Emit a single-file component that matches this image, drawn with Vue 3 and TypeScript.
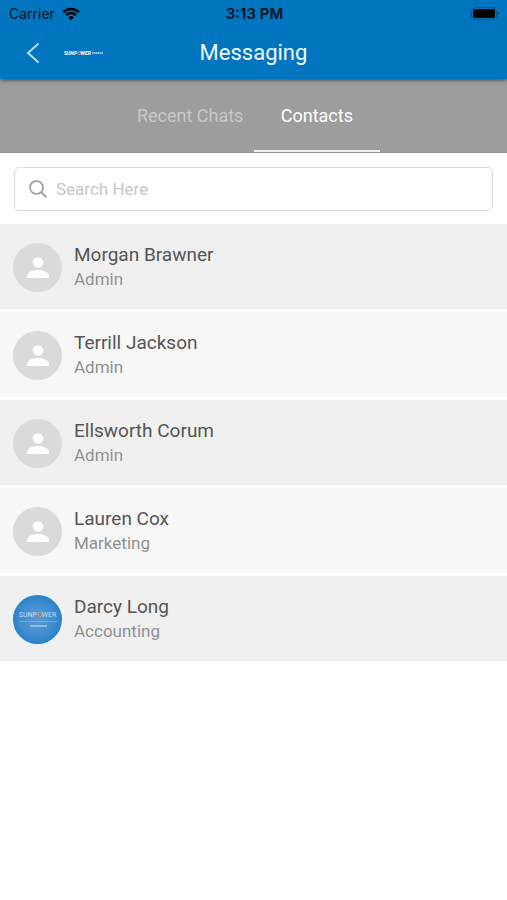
<script setup lang="ts">
import { computed, ref } from 'vue'

interface Contact {
  name: string
  role: string
  branded?: boolean
}

type Tab = 'Recent Chats' | 'Contacts'

const tabs: Tab[] = ['Recent Chats', 'Contacts']
const activeTab = ref<Tab>('Contacts')
const query = ref('')

const contacts: Contact[] = [
  { name: 'Morgan Brawner', role: 'Admin' },
  { name: 'Terrill Jackson', role: 'Admin' },
  { name: 'Ellsworth Corum', role: 'Admin' },
  { name: 'Lauren Cox', role: 'Marketing' },
  { name: 'Darcy Long', role: 'Accounting', branded: true },
]

const visibleContacts = computed(() =>
  contacts.filter((c) => c.name.toLowerCase().includes(query.value.trim().toLowerCase())),
)
</script>

<template>
  <div class="screen">
    <header class="top">
      <div class="status">
        <div class="carrier">
          <span>Carrier</span>
          <svg class="wifi" viewBox="0 0 18 14" aria-hidden="true">
            <path d="M1.2 5.1a11.2 11.2 0 0 1 15.6 0M4 8.1a7.2 7.2 0 0 1 10 0" fill="none" stroke="#000" stroke-width="2.5" />
            <path d="M9 13.4 6.1 10.4a4.1 4.1 0 0 1 5.8 0Z" fill="#000" />
          </svg>
        </div>
        <span class="time">3:13 PM</span>
        <svg class="battery" viewBox="0 0 30 14" aria-hidden="true">
          <rect x="1.5" y="0.5" width="25" height="12" rx="3.5" fill="none" stroke="#00497c" stroke-opacity="0.7" />
          <rect x="3" y="2" width="22" height="9" rx="2" fill="#000" />
          <path d="M27.500 4.500v4c1.200-.4 1.800-1.100 1.800-2s-.6-1.600-1.800-2Z" fill="#00497c" fill-opacity="0.8" />
        </svg>
      </div>
      <div class="bar">
        <div class="bar-left">
          <button class="back" type="button" aria-label="Back">
            <svg viewBox="0 0 14 22" aria-hidden="true">
              <path d="M12.500 1.500 2 11l10.500 9.500" fill="none" stroke="#b5dcf5" stroke-width="2" />
            </svg>
          </button>
          <div class="brand">
            <span>SUNP<i>O</i>WER</span>
            <svg viewBox="0 0 11 2" aria-hidden="true">
              <path d="M0 1h11" stroke="#b9dcf3" stroke-width="1.400" stroke-dasharray="1.600 0.300" />
            </svg>
          </div>
        </div>
        <h1>Messaging</h1>
      </div>
    </header>

    <nav class="tabs">
      <button
        v-for="tab in tabs"
        :key="tab"
        type="button"
        class="tab"
        :class="{ active: tab === activeTab }"
        @click="activeTab = tab"
      >
        {{ tab }}
      </button>
    </nav>

    <main v-if="activeTab === 'Contacts'">
      <div class="search-area">
        <label class="search">
          <svg viewBox="0 0 18 18" aria-hidden="true">
            <circle cx="7.500" cy="7.500" r="6.500" fill="none" stroke="#999" stroke-width="1.600" />
            <path d="m12.200 12.200 5 5" stroke="#999" stroke-width="1.800" />
          </svg>
          <input v-model="query" type="text" placeholder="Search Here" aria-label="Search Here" />
        </label>
      </div>
      <ul class="contacts">
        <li v-for="contact in visibleContacts" :key="contact.name" class="contact">
          <div v-if="contact.branded" class="avatar branded">
            <span class="mark">SUNP<i>O</i>WER</span>
            <svg class="submark" viewBox="0 0 38 8" aria-hidden="true">
              <path d="M0 0.500h38" stroke="#82b2df" stroke-width="0.800" />
              <path d="M11 5h17" stroke="#b4d2ec" stroke-width="1.600" stroke-dasharray="1.700 0.300" />
            </svg>
          </div>
          <div v-else class="avatar">
            <svg class="person" viewBox="0 0 22 22" aria-hidden="true">
              <circle cx="11" cy="5.500" r="5.200" fill="#fff" />
              <path d="M0 21v-1.500C0 15.500 5.500 13 11 13s11 2.500 11 6.500V21Z" fill="#fff" />
            </svg>
          </div>
          <div class="details">
            <span class="name">{{ contact.name }}</span>
            <span class="role">{{ contact.role }}</span>
          </div>
        </li>
      </ul>
    </main>
  </div>
</template>

<style>
body {
  background: #fff;
}
</style>

<style scoped>
.screen {
  font-family: Roboto, "Liberation Sans", sans-serif;
}

button {
  margin: 0;
  padding: 0;
  border: 0;
  background: none;
  font: inherit;
  cursor: pointer;
}

i {
  font-style: normal;
  color: #e8a050;
}

.top {
  position: relative;
  background: #0275c0;
  box-shadow: 0 1px 4px rgba(0, 0, 0, 0.6);
}

.status {
  display: grid;
  grid-template-columns: 1fr auto 1fr;
  align-items: center;
  height: 27px;
  padding: 0 7px 0 9px;
  color: #04111c;
  font-family: Inter, sans-serif;
  font-size: 14px;
}

.carrier {
  display: flex;
  align-items: center;
  gap: 7px;
}

.wifi {
  width: 18px;
  height: 14px;
}

.time {
  font-size: 15px;
  font-weight: 600;
}

.battery {
  justify-self: end;
  width: 30px;
  height: 14px;
}

.bar {
  display: grid;
  grid-template-columns: 1fr auto 1fr;
  align-items: center;
  height: 52px;
}

.bar-left {
  display: flex;
  align-items: center;
  gap: 24px;
  padding-left: 26px;
}

.back svg {
  display: block;
  width: 14px;
  height: 22px;
}

.brand {
  display: flex;
  align-items: center;
  gap: 1px;
  color: #fff;
  font-size: 5px;
  font-weight: 700;
  line-height: 6px;
  white-space: nowrap;
}

.brand svg {
  width: 11px;
  height: 2px;
}

h1 {
  margin: 0;
  color: #f2f9ff;
  font-size: 22px;
  font-weight: 400;
  line-height: 28px;
}

.tabs {
  display: flex;
  height: 73px;
  padding: 0 25%;
  border-bottom: 1px solid #919191;
  background: #9d9d9d;
}

.tab {
  flex: 1;
  padding-top: 2px;
  border-bottom: 2px solid transparent;
  color: #c8c8c8;
  font-size: 18px;
  white-space: nowrap;
}

.tab.active {
  border-bottom-color: #f0f0f0;
  color: #fff;
}

.search-area {
  padding: 14px 14px 13px;
}

.search {
  display: flex;
  align-items: center;
  gap: 9px;
  height: 42px;
  padding: 0 14px;
  border: 1px solid #dcdcdc;
  border-radius: 5px;
}

.search svg {
  flex: none;
  width: 18px;
  height: 18px;
}

.search input {
  flex: 1;
  min-width: 0;
  padding: 0;
  border: 0;
  outline: 0;
  background: none;
  color: #555;
  font: inherit;
  font-size: 17px;
  line-height: 22px;
}

.search input::placeholder {
  color: #c6c6c6;
  opacity: 1;
}

.contacts {
  display: flex;
  flex-direction: column;
  gap: 3px;
  margin: 0;
  padding: 0;
  list-style: none;
}

.contact {
  display: flex;
  align-items: center;
  gap: 12px;
  padding: 18px 13px 17px;
  background: #f0f0f0;
}

.contact:nth-child(even) {
  background: #f7f7f7;
}

.avatar {
  display: flex;
  flex: none;
  flex-direction: column;
  align-items: center;
  justify-content: center;
  width: 49px;
  height: 49px;
  margin-top: 1px;
  border-radius: 50%;
  background: #dadada;
}

.person {
  width: 22px;
  height: 22px;
}

.branded {
  background: radial-gradient(circle, #5b9bd6 0%, #3d8ccf 50%, #0a74c2 100%);
  color: #c3dbef;
}

.mark {
  padding-bottom: 2px;
  font-size: 7px;
  line-height: 8px;
}

.submark {
  width: 38px;
  height: 8px;
}

.details {
  display: flex;
  flex-direction: column;
  line-height: 24px;
}

.name {
  color: #555;
  font-size: 19px;
}

.role {
  color: #909090;
  font-size: 17px;
}
</style>
